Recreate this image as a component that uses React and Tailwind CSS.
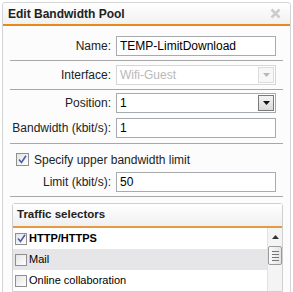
import React from "react";

const font = { fontFamily: '"Liberation Sans", Arial, sans-serif' };

function Arrow({ disabled }) {
  return (
    <svg width="7" height="4" viewBox="0 0 7 4">
      <path d="M0 0 L7 0 L3.5 4 Z" fill={disabled ? "#b8b8b8" : "#111"} />
    </svg>
  );
}

function Row({ label, children, className = "" }) {
  return (
    <div className={`flex h-[20px] items-center ${className}`}>
      <div className="w-[101px] text-right text-[12px] text-[#222]">{label}</div>
      <div className="ml-[5px] h-[20px] w-[160px]">{children}</div>
    </div>
  );
}

function TextBox({ value }) {
  return (
    <div className="flex h-full items-center border border-[#a7abb0] bg-white pl-[3px] text-[12px] text-black">
      {value}
    </div>
  );
}

function Select({ value, disabled }) {
  return (
    <div
      className={`flex h-full items-center border bg-white pl-[3px] text-[12px] ${
        disabled ? "border-[#d6d6d6] text-[#b9b9b9]" : "border-[#a7abb0] text-black"
      }`}
    >
      <span className="flex-1">{value}</span>
      <div
        className={`mr-[1px] flex h-[16px] w-[16px] items-center justify-center border ${
          disabled
            ? "border-[#dcdcdc] bg-[#f7f7f7]"
            : "border-[#7a7a7a] bg-gradient-to-b from-[#f4f4f4] to-[#d9d9d9]"
        }`}
      >
        <Arrow disabled={disabled} />
      </div>
    </div>
  );
}

function Sep({ className = "" }) {
  return <div className={`h-px bg-[#a8a8a8] ${className}`} />;
}

function Check({ checked, size = 13 }) {
  return (
    <div
      className="flex items-center justify-center border border-[#8f8f8f] bg-gradient-to-br from-[#e4e4e4] to-[#ffffff]"
      style={{ width: size, height: size }}
    >
      {checked && (
        <svg width="9" height="9" viewBox="0 0 9 9">
          <path d="M1 4.5 L3.5 7.5 L8 0.8" fill="none" stroke="#4a5fa8" strokeWidth="1.6" />
        </svg>
      )}
    </div>
  );
}

function ListItem({ label, checked, bold, shaded }) {
  return (
    <div className={`flex h-[21px] items-center pl-[2px] ${shaded ? "bg-[#e6e6e8]" : ""}`}>
      <Check checked={checked} size={12} />
      <span className={`ml-[2px] text-[11px] text-black ${bold ? "font-bold" : ""}`}>{label}</span>
    </div>
  );
}

export default function App() {
  return (
    <div className="h-[292px] w-[293px] overflow-hidden bg-white" style={font}>
      <div className="ml-[2px] mt-[2px] h-[300px] w-[289px] rounded-t-[3px] border border-[#d4d4d4] bg-[#fcfcfc]">
        {/* header */}
        <div className="flex h-[23px] items-center justify-between rounded-t-[3px] border-b-2 border-[#e8891a] bg-gradient-to-b from-white to-[#f1f1f1] pl-[5px] pr-[9px]">
          <span className="text-[12px] font-bold text-[#222]">Edit Bandwidth Pool</span>
          <svg width="11" height="11" viewBox="0 0 11 11">
            <path d="M1.5 1.5 L9.5 9.5 M9.5 1.5 L1.5 9.5" stroke="#cdcdcd" strokeWidth="2.6" />
          </svg>
        </div>

        <div className="px-[7px]">
          <Row label="Name:" className="mt-[10px]">
            <TextBox value="TEMP-LimitDownload" />
          </Row>
          <Sep className="mt-[4px]" />
          <Row label="Interface:" className="mt-[4px]">
            <Select value="Wifi-Guest" disabled />
          </Row>
          <Sep className="mt-[4px]" />
          <Row label="Position:" className="mt-[3px]">
            <Select value="1" />
          </Row>
          <Row label="Bandwidth (kbit/s):" className="mt-[5px]">
            <TextBox value="1" />
          </Row>
          <Sep className="mt-[5px]" />

          <div className="mt-[9px] flex h-[13px] items-center pl-[6px]">
            <Check checked />
            <span className="ml-[5px] text-[12px] text-[#222]">Specify upper bandwidth limit</span>
          </div>
          <Row label="Limit (kbit/s):" className="mt-[6px]">
            <TextBox value="50" />
          </Row>
          <Sep className="mt-[4px]" />

          {/* traffic selectors */}
          <div className="ml-[2px] mt-[6px] w-[271px] rounded-t-[3px] border border-[#cfcfcf] bg-white">
            <div className="flex h-[24px] items-center border-b-2 border-[#e29a45] bg-gradient-to-b from-white to-[#f0f0f0] pl-[4px]">
              <span className="text-[11.5px] font-bold text-[#222]">Traffic selectors</span>
            </div>
            <div className="flex">
              <div className="flex-1">
                <ListItem label="HTTP/HTTPS" checked bold />
                <ListItem label="Mail" shaded />
                <ListItem label="Online collaboration" />
              </div>
              <div className="flex w-[15px] flex-col items-center border-l border-[#e2e2e2] bg-[#f4f4f4]">
                <svg className="mt-[7px]" width="7" height="4" viewBox="0 0 7 4">
                  <path d="M0 4 L7 4 L3.5 0 Z" fill="#333" />
                </svg>
                <div className="mt-[7px] flex h-[19px] w-[14px] flex-col items-center justify-center gap-[2px] rounded-[2px] border border-[#9a9a9a] bg-gradient-to-r from-[#fafafa] to-[#e4e4e4]">
                  <div className="h-px w-[7px] bg-[#777]" />
                  <div className="h-px w-[7px] bg-[#777]" />
                  <div className="h-px w-[7px] bg-[#777]" />
                  <div className="h-px w-[7px] bg-[#777]" />
                </div>
              </div>
            </div>
          </div>
        </div>
      </div>
    </div>
  );
}
